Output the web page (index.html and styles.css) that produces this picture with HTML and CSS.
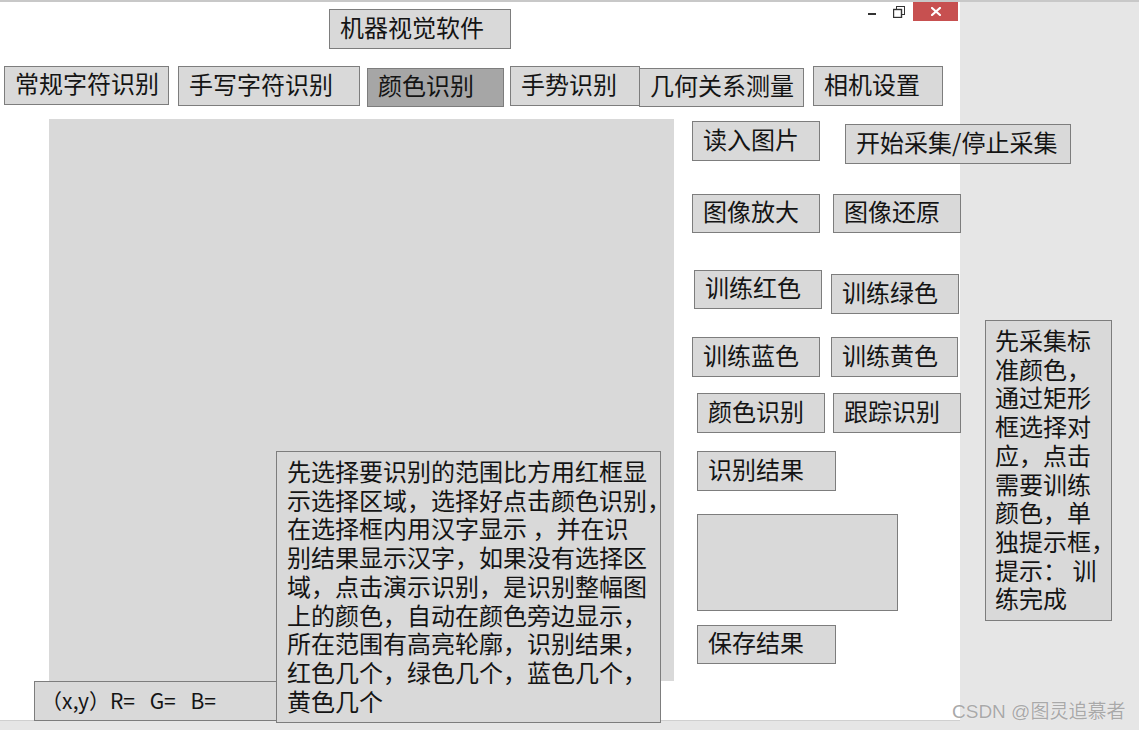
FILE: index.html
```html
<!DOCTYPE html>
<html lang="zh-CN">
<head>
<meta charset="utf-8">
<title>机器视觉软件</title>
<link rel="stylesheet" href="styles.css">
</head>
<body>
<div class="screen">
  <div class="form">
    <div class="winctl">
      <span class="wc wc-min"><svg width="10" height="10" viewBox="0 0 10 10"><rect x="1" y="6" width="8" height="2" fill="#333"/></svg></span>
      <span class="wc wc-max"><svg width="12" height="12" viewBox="0 0 12 12"><rect x="3.5" y="0.5" width="8" height="8" fill="none" stroke="#333" stroke-width="1"/><rect x="0.5" y="3.5" width="8" height="8" fill="#fff" stroke="#333" stroke-width="1.4"/></svg></span>
      <span class="wc wc-close"><svg width="10" height="9" viewBox="0 0 10 9"><path d="M1 1 L9 8 M9 1 L1 8" stroke="#fff" stroke-width="2.2" stroke-linecap="square"/></svg></span>
    </div>

    <div class="ctl title">机器视觉软件</div>

    <div class="ctl tab t1">常规字符识别</div>
    <div class="ctl tab t2">手写字符识别</div>
    <div class="ctl tab t3 active">颜色识别</div>
    <div class="ctl tab t4">手势识别</div>
    <div class="ctl tab t5">几何关系测量</div>
    <div class="ctl tab t6">相机设置</div>

    <div class="picture"></div>

    <div class="ctl b-read">读入图片</div>
    <div class="ctl b-cap">开始采集/停止采集</div>
    <div class="ctl b-zoom">图像放大</div>
    <div class="ctl b-restore">图像还原</div>
    <div class="ctl b-red">训练红色</div>
    <div class="ctl b-green">训练绿色</div>
    <div class="ctl b-blue">训练蓝色</div>
    <div class="ctl b-yellow">训练黄色</div>
    <div class="ctl b-color">颜色识别</div>
    <div class="ctl b-track">跟踪识别</div>
    <div class="ctl b-result">识别结果</div>
    <div class="ctl blank"></div>
    <div class="ctl b-save">保存结果</div>

    <div class="ctl coords">（x,y）R= G= B=</div>

    <div class="ctl desc">先选择要识别的范围比方用红框显<br>示选择区域，选择好点击颜色识别，<br>在选择框内用汉字显示 ，并在识<br>别结果显示汉字，如果没有选择区<br>域，点击演示识别，是识别整幅图<br>上的颜色，自动在颜色旁边显示，<br>所在范围有高亮轮廓，识别结果，<br>红色几个，绿色几个，蓝色几个，<br>黄色几个</div>
  </div>

  <div class="ctl note">先采集标<br>准颜色，<br>通过矩形<br>框选择对<br>应，点击<br>需要训练<br>颜色，单<br>独提示框，<br>提示： 训<br>练完成</div>

  <div class="watermark">CSDN @图灵追慕者</div>
</div>
</body>
</html>
```

FILE: styles.css
```css
html, body {
  margin: 0;
  padding: 0;
  background: #e6e6e6;
}

.screen {
  position: relative;
  width: 1139px;
  height: 730px;
  overflow: hidden;
  background: #e6e6e6;
  font-family: "Noto Sans CJK SC", "Noto Sans", sans-serif;
  color: #141414;
}

.screen::before {
  content: "";
  position: absolute;
  left: 0;
  top: 0;
  width: 100%;
  height: 2px;
  background: #c8c8c8;
  z-index: 1;
}

.form {
  position: relative;
  width: 960px;
  height: 721px;
  background: #ffffff;
  border-bottom: 1px solid #d0d0d0;
  box-sizing: border-box;
}

/* window controls */
.winctl {
  position: absolute;
  left: 858px;
  top: 2px;
  display: flex;
  height: 19px;
}
.wc {
  display: flex;
  align-items: center;
  justify-content: center;
  height: 19px;
}
.wc-min { width: 27px; }
.wc-max { width: 28px; }
.wc-close {
  width: 45px;
  background: #c75050;
}

/* generic control */
.ctl {
  position: absolute;
  box-sizing: border-box;
  background: #d9d9d9;
  border: 1px solid #7d7d7d;
  font-size: 24px;
  line-height: 24px;
  padding: 0 0 5px 10px;
  display: flex;
  align-items: center;
  white-space: nowrap;
}

.title { left: 329px; top: 9px; width: 182px; height: 40px; }

.t1 { left: 4px; top: 66px; width: 165px; height: 39px; }
.t2 { left: 178px; top: 66px; width: 182px; height: 40px; }
.t3 { left: 367px; top: 68px; width: 137px; height: 39px; }
.t4 { left: 510px; top: 66px; width: 130px; height: 40px; }
.t5 { left: 639px; top: 68px; width: 165px; height: 39px; }
.t6 { left: 813px; top: 66px; width: 130px; height: 40px; }
.tab.active { background: #a6a6a6; }

.picture {
  position: absolute;
  left: 49px;
  top: 119px;
  width: 625px;
  height: 562px;
  background: #d9d9d9;
}

.b-read    { left: 692px; top: 121px; width: 128px; height: 40px; }
.b-cap     { left: 845px; top: 124px; width: 226px; height: 40px; z-index: 2; }
.b-zoom    { left: 692px; top: 194px; width: 128px; height: 39px; }
.b-restore { left: 833px; top: 194px; width: 128px; height: 39px; }
.b-red     { left: 694px; top: 270px; width: 128px; height: 39px; }
.b-green   { left: 831px; top: 274px; width: 128px; height: 40px; }
.b-blue    { left: 692px; top: 337px; width: 128px; height: 40px; }
.b-yellow  { left: 831px; top: 337px; width: 127px; height: 40px; }
.b-color   { left: 697px; top: 393px; width: 128px; height: 40px; }
.b-track   { left: 833px; top: 393px; width: 128px; height: 40px; }
.b-result  { left: 697px; top: 451px; width: 139px; height: 40px; }
.blank     { left: 697px; top: 514px; width: 201px; height: 97px; }
.b-save    { left: 697px; top: 625px; width: 139px; height: 39px; }

.coords {
  left: 34px;
  top: 681px;
  width: 243px;
  height: 40px;
  font-size: 21px;
  word-spacing: 10px;
  padding: 0 0 3px 6px;
}

.desc {
  left: 276px;
  top: 451px;
  width: 385px;
  height: 272px;
  display: block;
  line-height: 28.7px;
  padding: 5px 0 0 10px;
  z-index: 2;
}

.note {
  left: 985px;
  top: 320px;
  width: 127px;
  height: 301px;
  display: block;
  line-height: 28.7px;
  padding: 5px 0 0 9px;
}

.watermark {
  position: absolute;
  left: 952px;
  top: 700px;
  font-family: "Liberation Sans", "Noto Sans CJK SC", sans-serif;
  font-size: 19px;
  line-height: 24px;
  color: #a9a9a9;
  text-shadow: 0 0 1px #ffffff;
  white-space: nowrap;
  z-index: 3;
}
```
